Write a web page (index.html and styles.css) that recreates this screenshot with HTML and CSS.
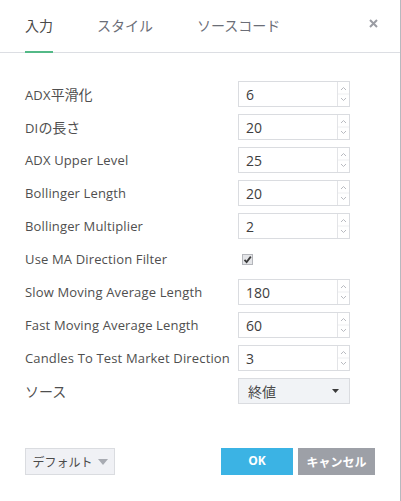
FILE: index.html
```html
<!DOCTYPE html>
<html lang="ja">
<head>
<meta charset="utf-8">
<link rel="stylesheet" href="styles.css">
</head>
<body>
<div class="dialog">
  <div class="header">
    <div class="tab active">入力</div>
    <div class="tab">スタイル</div>
    <div class="tab">ソースコード</div>
    <div class="close">
      <svg width="9" height="9" viewBox="0 0 9 9"><path d="M1 1L8 8M8 1L1 8" stroke="#9a9ca3" stroke-width="2" fill="none"/></svg>
    </div>
  </div>
  <div class="content">
    <div class="row"><div class="label">ADX<span class="cjk">平滑化</span></div><div class="spin"><span class="val">6</span><span class="arrows"><svg width="11" height="24" viewBox="0 0 11 24"><path d="M3 8L5.5 5.5L8 8" stroke="#b8bac0" fill="none"/><path d="M3 16L5.5 18.5L8 16" stroke="#b8bac0" fill="none"/><path d="M0 12H11" stroke="#eeeff1"/></svg></span></div></div>
    <div class="row"><div class="label">DI<span class="cjk">の長さ</span></div><div class="spin"><span class="val">20</span><span class="arrows"><svg width="11" height="24" viewBox="0 0 11 24"><path d="M3 8L5.5 5.5L8 8" stroke="#b8bac0" fill="none"/><path d="M3 16L5.5 18.5L8 16" stroke="#b8bac0" fill="none"/><path d="M0 12H11" stroke="#eeeff1"/></svg></span></div></div>
    <div class="row"><div class="label">ADX Upper Level</div><div class="spin"><span class="val">25</span><span class="arrows"><svg width="11" height="24" viewBox="0 0 11 24"><path d="M3 8L5.5 5.5L8 8" stroke="#b8bac0" fill="none"/><path d="M3 16L5.5 18.5L8 16" stroke="#b8bac0" fill="none"/><path d="M0 12H11" stroke="#eeeff1"/></svg></span></div></div>
    <div class="row"><div class="label">Bollinger Length</div><div class="spin"><span class="val">20</span><span class="arrows"><svg width="11" height="24" viewBox="0 0 11 24"><path d="M3 8L5.5 5.5L8 8" stroke="#b8bac0" fill="none"/><path d="M3 16L5.5 18.5L8 16" stroke="#b8bac0" fill="none"/><path d="M0 12H11" stroke="#eeeff1"/></svg></span></div></div>
    <div class="row"><div class="label">Bollinger Multiplier</div><div class="spin"><span class="val">2</span><span class="arrows"><svg width="11" height="24" viewBox="0 0 11 24"><path d="M3 8L5.5 5.5L8 8" stroke="#b8bac0" fill="none"/><path d="M3 16L5.5 18.5L8 16" stroke="#b8bac0" fill="none"/><path d="M0 12H11" stroke="#eeeff1"/></svg></span></div></div>
    <div class="row"><div class="label">Use MA Direction Filter</div><div class="checkwrap"><span class="check"><svg width="9" height="9" viewBox="0 0 9 9"><path d="M1.5 4.8L3.6 7L7.8 1.6" stroke="#3a3a3a" stroke-width="1.8" fill="none"/></svg></span></div></div>
    <div class="row"><div class="label">Slow Moving Average Length</div><div class="spin"><span class="val">180</span><span class="arrows"><svg width="11" height="24" viewBox="0 0 11 24"><path d="M3 8L5.5 5.5L8 8" stroke="#b8bac0" fill="none"/><path d="M3 16L5.5 18.5L8 16" stroke="#b8bac0" fill="none"/><path d="M0 12H11" stroke="#eeeff1"/></svg></span></div></div>
    <div class="row"><div class="label">Fast Moving Average Length</div><div class="spin"><span class="val">60</span><span class="arrows"><svg width="11" height="24" viewBox="0 0 11 24"><path d="M3 8L5.5 5.5L8 8" stroke="#b8bac0" fill="none"/><path d="M3 16L5.5 18.5L8 16" stroke="#b8bac0" fill="none"/><path d="M0 12H11" stroke="#eeeff1"/></svg></span></div></div>
    <div class="row"><div class="label">Candles To Test Market Direction</div><div class="spin"><span class="val">3</span><span class="arrows"><svg width="11" height="24" viewBox="0 0 11 24"><path d="M3 8L5.5 5.5L8 8" stroke="#b8bac0" fill="none"/><path d="M3 16L5.5 18.5L8 16" stroke="#b8bac0" fill="none"/><path d="M0 12H11" stroke="#eeeff1"/></svg></span></div></div>
    <div class="row"><div class="label cjk">ソース</div><div class="select"><span class="selval">終値</span><svg width="7" height="4" viewBox="0 0 7 4"><path d="M0 0H7L3.5 4Z" fill="#3a3a3a"/></svg></div></div>
  </div>
  <div class="footer">
    <div class="defaults">デフォルト <svg width="10" height="6" viewBox="0 0 10 6"><path d="M0 0H10L5 6Z" fill="#a8abb2"/></svg></div>
    <div class="spacer"></div>
    <div class="btn ok">OK</div>
    <div class="btn cancel">キャンセル</div>
  </div>
</div>
</body>
</html>
```
FILE: styles.css
```css
html, body {
  margin: 0;
  padding: 0;
  background: #ffffff;
}
body {
  font-family: "Open Sans", "Noto Sans CJK JP", sans-serif;
  color: #4f4f4f;
}
svg {
  display: block;
}
.dialog {
  width: 400px;
  height: 501px;
  border-right: 1px solid #b7b9bf;
  display: flex;
  flex-direction: column;
}
.header {
  height: 53px;
  box-sizing: border-box;
  display: flex;
  align-items: flex-start;
  padding-left: 25px;
  box-shadow: inset 0 -1px 0 #dcdee3;
  font-family: "Noto Sans CJK JP", sans-serif;
}
.tab {
  height: 53px;
  box-sizing: border-box;
  padding-top: 15px;
  font-size: 14px;
  line-height: 20px;
  color: #6b6e77;
  border-bottom: 2px solid transparent;
  margin-right: 44px;
}
.tab.active {
  color: #4a4a4a;
  border-bottom-color: #53b987;
}
.close {
  margin-left: auto;
  margin-right: 22px;
  padding-top: 19px;
}
.content {
  padding: 28px 0 0 25px;
  display: flex;
  flex-direction: column;
  gap: 7px;
}
.row {
  display: flex;
  align-items: center;
  height: 26px;
}
.label {
  width: 213px;
  font-size: 13px;
  letter-spacing: 0.15px;
  white-space: nowrap;
}
.cjk {
  font-family: "Noto Sans CJK JP", sans-serif;
  font-size: 14px;
  letter-spacing: 0;
}
.spin {
  width: 112px;
  height: 26px;
  box-sizing: border-box;
  border: 1px solid #dadce0;
  display: flex;
  align-items: center;
}
.val {
  flex: 1;
  padding-left: 7px;
  font-size: 14px;
  color: #3e3e3e;
}
.arrows {
  width: 11px;
  height: 24px;
  border-left: 1px solid #e3e4e7;
  display: flex;
}
.checkwrap {
  padding-left: 4px;
  display: flex;
}
.check {
  width: 11px;
  height: 11px;
  box-sizing: border-box;
  border: 1px solid #b4b6bb;
  background: #e4e5e8;
  display: flex;
  align-items: center;
  justify-content: center;
}
.select {
  width: 112px;
  height: 26px;
  box-sizing: border-box;
  border: 1px solid #dadce0;
  background: #f1f3f6;
  display: flex;
  align-items: center;
  padding: 0 10px 0 9px;
}
.selval {
  flex: 1;
  font-family: "Noto Sans CJK JP", sans-serif;
  font-size: 14px;
  color: #4a4a4a;
}
.footer {
  margin-top: 44px;
  padding: 0 25px;
  display: flex;
  align-items: center;
}
.defaults {
  width: 90px;
  height: 27px;
  box-sizing: border-box;
  border: 1px solid #dadce0;
  background: #f0f1f5;
  font-family: "Noto Sans CJK JP", sans-serif;
  font-size: 12px;
  color: #4a4a4a;
  display: flex;
  align-items: center;
  justify-content: center;
  gap: 5px;
}
.spacer {
  flex: 1;
}
.btn {
  height: 27px;
  display: flex;
  align-items: center;
  justify-content: center;
  color: #ffffff;
  font-weight: bold;
}
.ok {
  width: 72px;
  background: #3bb3e4;
  font-family: "Open Sans", sans-serif;
  font-size: 12px;
  margin-right: 5px;
  padding-bottom: 3px;
  box-sizing: border-box;
}
.cancel {
  width: 77px;
  background: #9da0a7;
  font-family: "Noto Sans CJK JP", sans-serif;
  font-size: 12px;
}
```
